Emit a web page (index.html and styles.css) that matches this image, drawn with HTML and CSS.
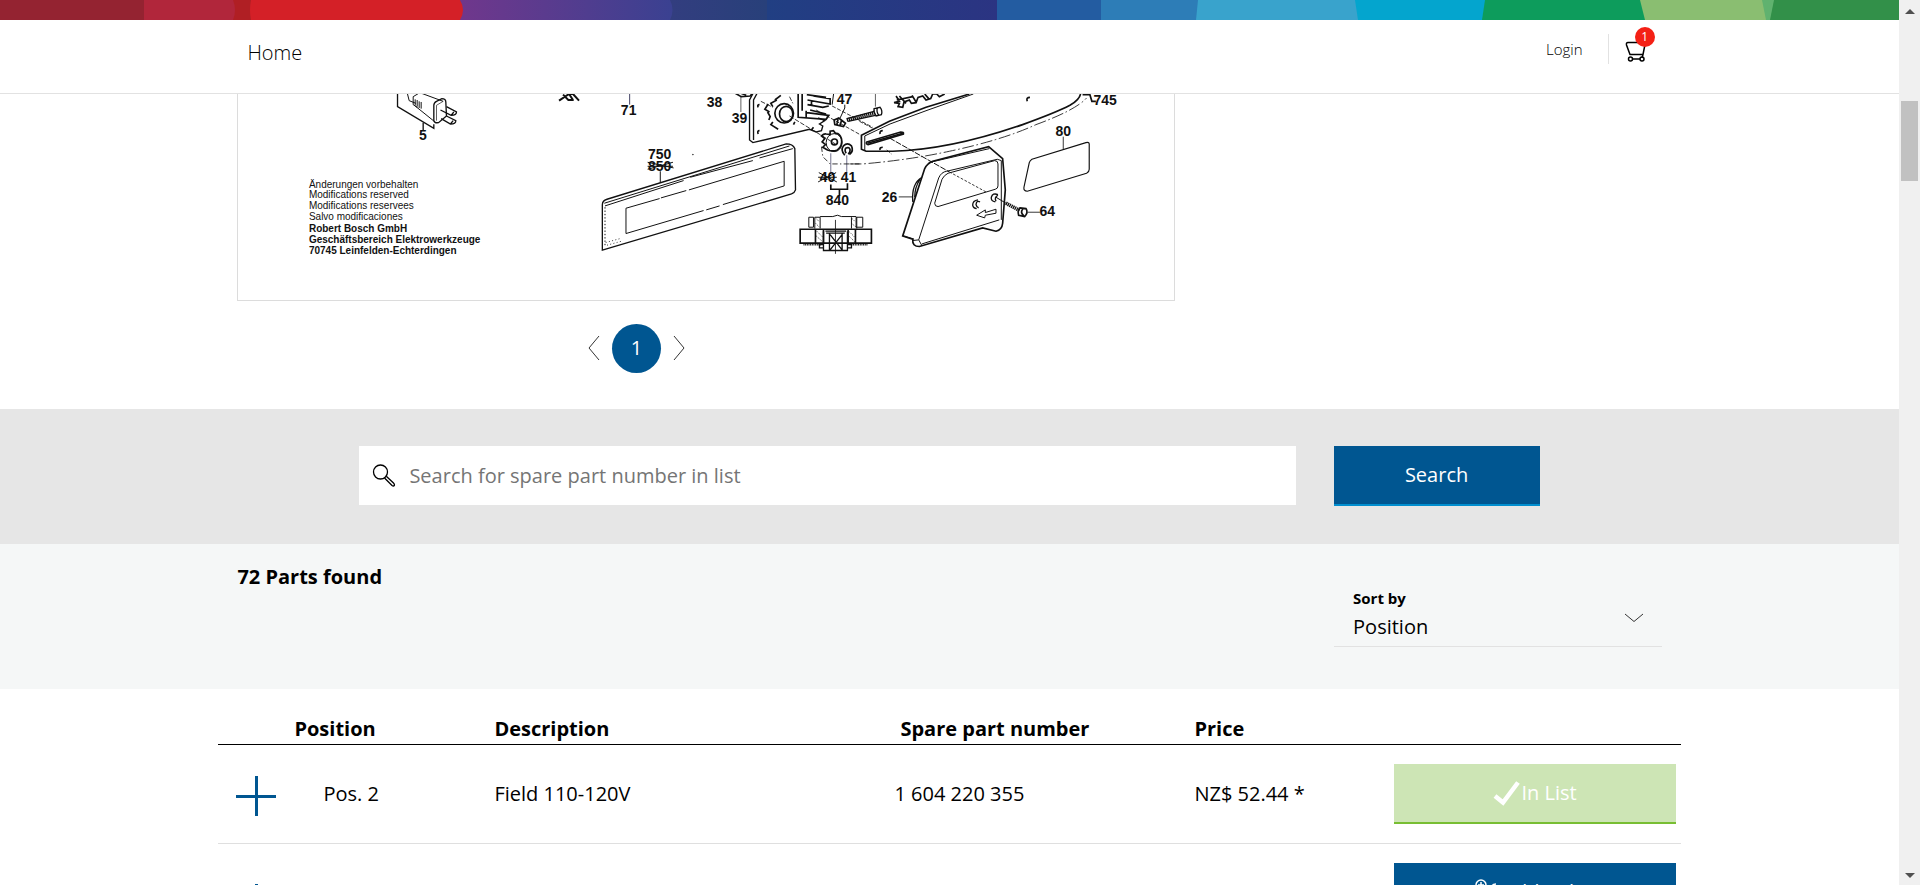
FILE: index.html
```html
<!DOCTYPE html>
<html lang="en">
<head>
<meta charset="utf-8">
<title>Spare parts</title>
<link rel="stylesheet" href="styles.css">
</head>
<body>
<div class="page">
  <header class="header">
    <svg class="supergraphic" viewBox="0 0 1899 20" preserveAspectRatio="none" aria-hidden="true">
      <defs>
        <linearGradient id="violet"><stop offset="0" stop-color="#70378c"/><stop offset="1" stop-color="#3a4191"/></linearGradient>
        <linearGradient id="indigo"><stop offset="0" stop-color="#3a3c83"/><stop offset="1" stop-color="#28407a"/></linearGradient>
        <linearGradient id="navy" gradientUnits="userSpaceOnUse" x1="767" x2="997"><stop offset="0" stop-color="#213f83"/><stop offset="1" stop-color="#2b3482"/></linearGradient>
      </defs>
      <rect width="1899" height="20" fill="#329049"/>
      <path d="M0 0H1774L1770 20H0z" fill="#60b26f"/>
      <path d="M0 0H1762L1766 20H0z" fill="#8abe71"/>
      <path d="M0 0H1640L1645 20H0z" fill="#0d9c5c"/>
      <path d="M0 0H1485L1482 20H0z" fill="#04a5ce"/>
      <path d="M0 0H1355L1358 20H0z" fill="#39a3cc"/>
      <path d="M0 0H1198L1196 20H0z" fill="#2d7db7"/>
      <path d="M0 0H1101V20H0z" fill="#235ca1"/>
      <path d="M0 0H997V20H0z" fill="url(#navy)"/>
      <path d="M600 0H767V20H600z" fill="url(#indigo)"/>
      <path d="M460 0H670Q675 10 670 20H460z" fill="url(#violet)"/>
      <path d="M0 0H460Q466 10 460 20H0z" fill="#d42027"/>
      <path d="M0 0H251Q249 10 251 20H0z" fill="#b01f24"/>
      <path d="M0 0H233Q237 10 233 20H0z" fill="#b1263b"/>
      <path d="M0 0H144V20H0z" fill="#942331"/>
    </svg>
    <div class="header-bar">
      <nav class="main-nav"><a href="#">Home</a></nav>
      <div class="account">
        <a class="login" href="#">Login</a>
        <a class="cart" href="#" aria-label="Cart">
          <svg width="22" height="22" viewBox="0 0 22 22" fill="none" stroke="#000" stroke-width="1.5" aria-hidden="true">
            <path d="M20.500 1L18 13.500H5L1.500 4Q1 1.500 3 1.500H20M18 13.500L17 17"/>
            <circle cx="5.500" cy="18" r="2"/><circle cx="17" cy="18" r="2"/><path d="M7.500 18H15"/>
          </svg>
          <span class="badge">1</span>
        </a>
      </div>
    </div>
  </header>

  <main>
    <section class="drawing">
      <figure class="sheet">
        <svg class="diagram" viewBox="238 94 936 206" fill="none" stroke="#111" role="img" aria-label="Exploded view">
          <g transform="translate(230 90) scale(.33333)" stroke-width="4">
            <path d="M503 0V50L612 115V103"/>
            <path d="M530 0L538 32 558 40M550 20L570 8 640 34M570 8L615 0M556 48L618 98M550 20V44L562 52M556 28V46M562 30V50M568 34V54M574 36V56" stroke-width="3"/>
            <path d="M612 46Q612 38 620 34L636 26Q648 26 648 36L650 78 626 98Q612 100 612 90z"/>
            <path d="M620 92V46L640 34" stroke-width="2"/>
            <path d="M632 60L664 76Q680 76 680 66L650 50M634 86L662 102Q678 102 678 92L650 78M664 76L672 66M662 102L670 92M580 98V122"/>
            <path d="M988 32L1018 12H1030L1048 32M1000 14L1016 30H1032M1018 12L1030 30" stroke-width="6"/>
            <path d="M1200 0V44" stroke="#446" stroke-width="3"/>
          </g>
          <g transform="translate(560 90) scale(.33333)" stroke-width="3">
            <path d="M128 345Q128 332 142 328L680 162Q700 162 706 176L708 300Q706 308 696 312L128 481z" stroke-width="4"/>
            <path d="M134 340L690 168M136 348L372 272M392 262L580 212M600 204L700 176" stroke-width="3"/>
            <path d="M136 352V470" stroke-dasharray="4 6"/>
            <path d="M138 458L182 446M142 466L186 454" stroke-dasharray="3 7" stroke-width="2.500"/>
            <path d="M199 431V355L300 326M304 324L380 302M388 300L674 214V288L490 344M480 348L440 360M432 362L199 431" stroke-width="3"/>
            <path d="M302 244V278M264 217L342 234M264 238L340 217M264 229H340" stroke-width="3"/>
            <path d="M544 20V66" stroke-width="2"/>
            <path d="M524 8L545 20 572 18 580 8M530 4L560 16" stroke-width="5"/>
            <path d="M586 0L570 30V150L580 158 750 118 770 126 786 122 790 108 780 102 796 92 776 84M598 0L582 30V150" stroke-width="4"/>
            <path d="M600 44Q592 44 596 52M600 122Q592 122 596 132M706 96L702 104M762 112L756 120" stroke-width="5"/>
            <path d="M664 16L646 30M652 30L634 40 640 50M626 42L616 58 630 66M624 66L632 80 628 90M640 96L634 104 656 118" stroke-width="5"/>
            <ellipse cx="674" cy="70" rx="28" ry="29" stroke-width="5"/><ellipse cx="680" cy="72" rx="20" ry="23" stroke-width="5"/>
            <path d="M690 78L828 162M604 34L640 52M690 20L700 40" stroke-dasharray="14 5" stroke-width="2.500"/>
            <path d="M716 0V82L800 88 808 76 742 68M728 0V62M742 14L800 22M744 30L812 42V26L762 18M744 44L790 52 808 48M752 60L800 72M740 84V62M756 34V48" stroke-width="5"/>
            <path d="M856 44V54L842 84M824 0L818 44"/>
            <path d="M818 48L940 112M770 60L902 134" stroke-dasharray="12 5" stroke-width="2.500"/>
            <path d="M824 90L838 84 858 100 852 110 826 104zM836 88L832 104M846 92L842 106" stroke-width="5"/>
            <path d="M862 86L944 64M866 94L948 76" stroke-width="4"/><path d="M862 90L944 70" stroke-width="11" stroke-dasharray="4 2"/>
            <path d="M944 56L962 52Q970 62 966 74L950 78Q942 68 944 56zM954 54Q950 64 958 76" stroke-width="4"/>
            <path d="M948 0V50" stroke-width="2"/>
            <path d="M800 132Q794 130 786 138L796 146 788 156 798 164 790 172 804 180Q820 186 834 180Q850 168 846 146Q840 128 828 130L822 122 812 124V134z" stroke-width="5"/>
            <ellipse cx="824" cy="158" rx="24" ry="27"/><ellipse cx="825" cy="156" rx="9" ry="9" stroke-width="5"/>
            <path d="M856 196Q842 180 852 168Q864 156 876 168Q884 184 870 194M860 190Q854 180 860 174Q870 170 872 180Q872 188 866 192" stroke-width="5"/>
            <path d="M814 190V250M862 196V250" stroke="#557" stroke-width="2.500"/>
            <path d="M786 170L790 200 812 222H900" stroke-dasharray="16 7 4 7" stroke-width="2.500"/>
            <path d="M778 248L832 276M776 276L830 248M776 262H832" stroke-width="3"/>
            <path d="M814 284V298H864V280M840 298V318" stroke-width="5"/>
            <path d="M748 382H762V412H748zM890 382H910V412H890zM766 382H782V416M782 380H820L834 376 846 380H890M876 382V416M766 382V416M892 382V416"/>
            <path d="M722 418H936V460H722zM768 418V460M792 418V460M866 418V460M888 418V460" stroke-width="5"/>
            <path d="M770 386L780 396M768 400L780 412M772 424L790 442M770 438L790 456M878 386L888 396M876 400L890 412M868 424L886 442M868 438L886 456" stroke-width="2" stroke-dasharray="4 3"/>
            <path d="M732 464H784M876 464H926" stroke-width="6" stroke-dasharray="3 2"/>
            <path d="M792 424V482H864V424M798 424H860M810 430V482M848 430V482M800 430H856M812 434L848 480M848 434L812 480M780 464H792V474H780zM864 464H876V474H864z" stroke-width="4"/>
            <path d="M828 390V492" stroke-width="2.500"/>
            <circle cx="400" cy="194" r="1"/>
          </g>
          <g transform="translate(850 90) scale(.33333)" stroke-width="3.500">
            <path d="M360 12L230 52 120 94 36 136V178L50 184H130Q300 180 520 104Q620 68 662 46Q690 30 694 12" stroke-width="5"/>
            <path d="M372 12L236 60 122 102 46 138V182" stroke-width="3"/>
            <path d="M52 156L154 126Q164 126 162 132L56 164Q48 162 52 156z" stroke-width="5"/>
            <path d="M54 160L160 130M100 122Q90 122 92 132M100 172Q90 172 92 180M542 22Q530 22 534 34" stroke-width="5"/>
            <path d="M30 94L72 116M112 180L126 192" stroke-dasharray="12 4" stroke-width="2.500"/>
            <path d="M140 18L150 34 134 38 150 40 146 50 160 52 164 36 180 30 186 40 200 38 206 22 220 18 230 30 244 26 250 12 262 12 270 20 286 12M142 30L190 20M150 18L170 40M188 16L200 36M226 12L238 26" stroke-width="5"/>
            <path d="M0 222H40Q180 210 300 184Q460 150 560 104Q680 60 712 24" stroke-dasharray="36 8 5 8" stroke-width="2.500"/>
            <path d="M700 14H722L728 34H740" stroke-width="5"/>
            <path d="M120 144L300 246" stroke-dasharray="18 4" stroke-width="3"/>
            <path d="M300 246L410 306" stroke-dasharray="8 5" stroke-width="2.500"/>
            <path d="M642 140V178M148 321H188" stroke-width="2.500"/>
            <path d="M548 208Q542 212 540 218L524 292Q522 304 534 304L712 250Q720 246 720 238V162Q720 156 710 158z"/>
            <path d="M160 438L226 236Q234 220 250 214L418 170 460 206 468 300 460 400Q458 420 440 424L400 414 210 470Q188 470 190 448z" stroke-width="5"/>
            <path d="M160 438L194 448M190 452L208 450 218 468M208 450L268 264Q276 246 292 244L444 208 456 212M238 218L420 176M218 462L450 390M456 212V390" stroke-width="3"/>
            <path d="M256 340L278 268Q284 256 296 250L436 212Q446 212 446 222V288Q446 296 438 298L266 350Q256 350 256 340z" stroke-width="3"/>
            <path d="M218 262Q186 280 190 336M212 268Q196 292 196 322" stroke-width="4"/>
            <path d="M386 330Q370 332 370 346Q372 356 382 356M392 336Q382 330 380 344Q382 352 388 354M446 314Q430 308 426 322Q424 334 438 336M446 316Q434 322 440 334" stroke-width="4"/>
            <path d="M382 376L408 360V368L440 358V370L408 376 406 384z" stroke-width="3"/>
            <path d="M440 322L470 340" stroke-width="3"/>
            <path d="M470 340L512 362" stroke-width="11" stroke-dasharray="4 2"/>
            <path d="M512 354L530 356Q538 368 526 380L508 376Q504 362 512 354zM520 358Q512 368 524 378" stroke-width="5"/>
            <path d="M536 367H572" stroke-width="2.500"/>
          </g>
          <g class="callouts">
            <text x="423" y="140">5</text><text x="629" y="115">71</text><text x="715" y="107">38</text>
            <text x="740" y="123">39</text><text x="845" y="104">47</text><text x="660" y="159">750</text>
            <text x="660" y="171">850</text><text x="828" y="182">40</text><text x="849" y="182">41</text>
            <text x="838" y="205">840</text><text x="890" y="202">26</text><text x="1048" y="216">64</text>
            <text x="1064" y="136">80</text><text x="1106" y="105">745</text>
          </g>
          <g class="imprint">
            <text x="309" y="188">Änderungen vorbehalten</text>
            <text x="309" y="198">Modifications reserved</text>
            <text x="309" y="209">Modifications reservees</text>
            <text x="309" y="220">Salvo modificaciones</text>
            <g class="imprint-strong">
              <text x="309" y="232">Robert Bosch GmbH</text>
              <text x="309" y="243">Geschäftsbereich Elektrowerkzeuge</text>
              <text x="309" y="254">70745 Leinfelden-Echterdingen</text>
            </g>
          </g>
        </svg>
      </figure>
      <nav class="pager" aria-label="Drawing pages">
        <button class="pager-arrow" type="button" aria-label="Previous"><svg width="12" height="26" viewBox="0 0 12 26"><path d="M11 1L1 13 11 25"/></svg></button>
        <button class="pager-page" type="button">1</button>
        <button class="pager-arrow" type="button" aria-label="Next"><svg width="12" height="26" viewBox="0 0 12 26"><path d="M1 1L11 13 1 25"/></svg></button>
      </nav>
    </section>

    <form class="search">
      <label class="search-field">
        <svg width="24" height="24" viewBox="0 0 24 24" fill="none" stroke="#000" stroke-width="1.300" aria-hidden="true">
          <circle cx="8.500" cy="9" r="7"/><path d="M12.500 15L20 22.500Q21.500 23.500 22.300 22.500Q22.800 21.300 21.500 20L14.300 13.300"/>
        </svg>
        <input class="search-input" type="text" aria-label="Search" placeholder="Search for spare part number in list">
      </label>
      <button class="button search-button" type="button">Search</button>
    </form>

    <section class="results">
      <h2 class="results-title">72 Parts found</h2>
      <div class="sort">
        <label class="sort-label" for="sort">Sort by</label>
        <select class="sort-select" id="sort"><option>Position</option></select>
        <svg class="sort-chevron" width="20" height="10" viewBox="0 0 20 10" aria-hidden="true"><path d="M1 1L10 8.500 19 1"/></svg>
      </div>
    </section>

    <table class="parts">
      <thead>
        <tr><th class="col-toggle"></th><th class="col-position">Position</th><th class="col-description">Description</th><th class="col-number">Spare part number</th><th class="col-price">Price</th><th class="col-action"></th></tr>
      </thead>
      <tbody>
        <tr>
          <td class="cell-toggle"><button class="expand" type="button" aria-label="Expand"></button></td>
          <td class="cell-position">Pos. 2</td><td>Field 110-120V</td><td>1 604 220 355</td><td>NZ$ 52.44 *</td>
          <td class="cell-action"><button class="button in-list" type="button"><svg width="28" height="26" viewBox="0 0 28 26" aria-hidden="true"><path d="M2 16L10 22.500 25 2.500" fill="none" stroke="#fff" stroke-width="4.500"/></svg>In List</button></td>
        </tr>
        <tr class="row-tall">
          <td class="cell-toggle"><button class="expand" type="button" aria-label="Expand"></button></td>
          <td class="cell-position">Pos. 3</td><td>Suppression Filter</td><td>1 604 220 356</td><td>NZ$ 52.44 *</td>
          <td class="cell-action"><button class="button" type="button"><svg width="28" height="26" viewBox="0 0 28 26" fill="none" stroke="#fff" stroke-width="1.500" aria-hidden="true"><circle cx="7" cy="6" r="5"/><path d="M7 3V9M4 6H10M7 11V24H18V8Q18 5 22 5"/></svg>Add to list</button></td>
        </tr>
      </tbody>
    </table>
  </main>
</div>
<div class="scrollbar" aria-hidden="true">
  <span class="arrow-up"></span>
  <span class="thumb"></span>
  <span class="arrow-down"></span>
</div>
</body>
</html>
```
FILE: styles.css
```css
* { box-sizing: border-box; }
body {
  margin: 0;
  display: flex;
  height: 100vh;
  overflow: hidden;
  background: #fff;
  color: #000;
  font: 400 20px/30px "Open Sans", "Noto Sans", sans-serif;
}
button, input, select { font: inherit; color: inherit; border: 0; border-radius: 0; background: none; padding: 0; }
a { color: inherit; text-decoration: none; }
.page { flex: 1; min-width: 0; overflow: hidden; }

/* Header */
.header { border-bottom: 1px solid #e2e2e2; background: #fff; }
.supergraphic { display: block; width: 100%; height: 20px; }
.header-bar { display: flex; justify-content: space-between; width: 75%; margin: 0 auto; height: 73px; padding: 14px 15px 0 10px; }
.main-nav { padding-top: 4px; font-weight: 300; }
.account { display: flex; align-items: flex-start; font-size: 15px; font-weight: 300; }
.login { padding-right: 25px; border-right: 1px solid #e2e2e2; }
.cart { position: relative; padding: 7px 0 0 16px; line-height: 0; }
.badge {
  position: absolute; left: 26px; top: -7px; width: 20px; height: 20px;
  border-radius: 50%; background: #f42015; color: #fff;
  font-size: 12px; font-weight: 400; line-height: 20px; text-align: center;
}

/* Drawing */
.drawing { width: 75%; margin: 0 auto; padding-bottom: 36px; }
.sheet { width: 65.8%; margin: 0; border: 1px solid #dcdcdc; border-top: 0; }
.diagram { display: block; width: 100%; height: auto; }
.diagram text { stroke: none; fill: #111; font-family: "Liberation Sans", Arial, sans-serif; }
.callouts text { font-size: 14px; font-weight: 700; text-anchor: middle; }
.imprint text { font-size: 10px; font-weight: 400; }
.imprint .imprint-strong text { font-weight: 700; }
.pager { display: flex; align-items: center; justify-content: center; gap: 12px; width: 798px; max-width: 100%; padding-top: 23px; }
.pager-page { width: 49px; height: 49px; border-radius: 50%; background: #005691; color: #fff; }
.pager-arrow { display: flex; }
.pager-arrow path, .sort-chevron path { fill: none; stroke: #333; }

/* Search */
.search { display: flex; justify-content: center; gap: 2%; padding: 37px 0 38px; background: #e6e6e6; }
.search-field { display: flex; align-items: center; gap: 13px; width: 49.3%; height: 59px; padding: 0 13px; background: #fff; }
.search-input { flex: 1; outline: 0; height: 59px; }
.search-input::placeholder { color: #757575; opacity: 1; }
.button { display: flex; align-items: center; justify-content: center; height: 60px; background: #005691; border-bottom: 2px solid #008ecf; color: #fff; }
.search-button { width: 206px; }

/* Results */
.results { display: flex; justify-content: space-between; padding: 18px 12.5% 0; height: 145px; background: #f5f7f7; }
.results-title { margin: 0; font-size: 20px; font-weight: 700; }
.sort { position: relative; display: flex; flex-direction: column; width: 23%; height: 85px; padding-top: 26px; border-bottom: 1px solid #e2e2e2; }
.sort-label { padding-left: 19px; font-size: 15px; font-weight: 700; line-height: 20px; }
.sort-select { appearance: none; height: 38px; padding-left: 19px; }
.sort-chevron { position: absolute; right: 18px; top: 51px; }

/* Parts table */
.parts { width: 77%; margin: 0 auto; border-collapse: collapse; table-layout: fixed; text-align: left; }
.parts th { height: 56px; padding: 24px 0 0; font-weight: 700; border-bottom: 1px solid #000; }
.parts td { height: 99px; padding: 19px 0 0; vertical-align: top; line-height: 60px; border-bottom: 1px solid #dfdfdf; }
.parts .row-tall td { height: 117px; }
.col-toggle { width: 76px; }
.col-position { width: 200px; }
.col-description { width: 400px; }
.col-number { width: 300px; }
.parts .col-number { padding-left: 6px; }
.col-price { width: 200px; }
.parts td.cell-toggle { padding: 4px 0 0 18px; vertical-align: middle; }
.parts td.cell-position { padding-left: 29px; }
.parts td.cell-action { padding-right: 5px; }
.cell-action .button { width: 100%; line-height: 30px; }
.parts .in-list { background: #cde5b5; border-bottom-color: #78be33; }
.expand {
  display: block; width: 40px; height: 40px;
  background:
    linear-gradient(#005691, #005691) center / 40px 3px no-repeat,
    linear-gradient(#005691, #005691) center / 3px 40px no-repeat;
}

/* Scrollbar */
.scrollbar { display: flex; flex-direction: column; align-items: center; width: 21px; padding: 9px 0 7px; background: #f0f0f0; }
.arrow-up, .arrow-down { border: 5px solid transparent; border-top: 0; border-bottom: 5px solid #505050; }
.arrow-down { border-top: 5px solid #505050; border-bottom: 0; margin-top: auto; }
.thumb { width: 17px; height: 80px; margin-top: 87px; background: #c1c1c1; }
```
